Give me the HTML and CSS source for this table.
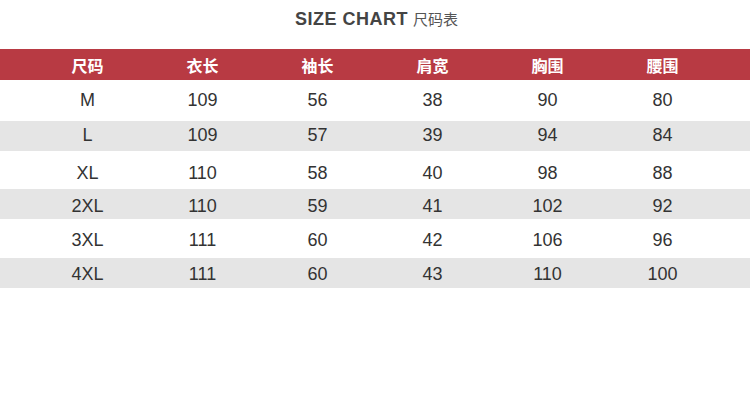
FILE: index.html
```html
<!DOCTYPE html>
<html lang="zh">
<head>
<meta charset="utf-8">
<link rel="stylesheet" href="styles.css">
</head>
<body>
<div class="page">
  <div class="title"><span class="en">SIZE CHART</span><span class="cn">尺码表</span></div>
  <div class="table">
    <div class="row head">
      <div>尺码</div><div>衣长</div><div>袖长</div><div>肩宽</div><div>胸围</div><div>腰围</div>
    </div>
    <div class="row r1">
      <div>M</div><div>109</div><div>56</div><div>38</div><div>90</div><div>80</div>
    </div>
    <div class="row r2 gray">
      <div>L</div><div>109</div><div>57</div><div>39</div><div>94</div><div>84</div>
    </div>
    <div class="row r3">
      <div>XL</div><div>110</div><div>58</div><div>40</div><div>98</div><div>88</div>
    </div>
    <div class="row r4 gray">
      <div>2XL</div><div>110</div><div>59</div><div>41</div><div>102</div><div>92</div>
    </div>
    <div class="row r5">
      <div>3XL</div><div>111</div><div>60</div><div>42</div><div>106</div><div>96</div>
    </div>
    <div class="row r6 gray">
      <div>4XL</div><div>111</div><div>60</div><div>43</div><div>110</div><div>100</div>
    </div>
  </div>
</div>
</body>
</html>
```
FILE: styles.css
```css
html, body {
  margin: 0;
  padding: 0;
  background: #fff;
}
.page {
  width: 750px;
  height: 406px;
  font-family: "Liberation Sans", Arial, "Noto Sans CJK SC", sans-serif;
}
.title {
  height: 49px;
  display: flex;
  justify-content: center;
  align-items: flex-start;
  padding-top: 8px;
  box-sizing: border-box;
  padding-left: 3px;
}
.title .en {
  font-size: 18px;
  font-weight: bold;
  color: #444;
  letter-spacing: 0.5px;
  line-height: 22px;
}
.title .cn {
  font-family: "Noto Sans CJK SC", sans-serif;
  font-size: 15px;
  color: #555;
  margin-left: 5px;
  line-height: 22px;
}
.row {
  display: grid;
  grid-template-columns: repeat(6, 115px);
  padding-left: 30px;
  align-items: center;
  font-size: 18px;
  color: #333;
  box-sizing: border-box;
}
.row > div {
  text-align: center;
}
.row.head {
  height: 31px;
  background: #b83a43;
  color: #fff;
  font-family: "Noto Sans CJK SC", sans-serif;
  font-weight: bold;
  font-size: 16px;
}
.row.gray { background: #e5e5e5; }
.r1 { height: 41px; }
.r2 { height: 30px; padding-bottom: 2px; }
.r3 { height: 38px; padding-top: 6px; }
.r4 { height: 30px; padding-top: 4px; }
.r5 { height: 39px; padding-top: 4px; }
.r6 { height: 30px; padding-top: 3px; }
```
